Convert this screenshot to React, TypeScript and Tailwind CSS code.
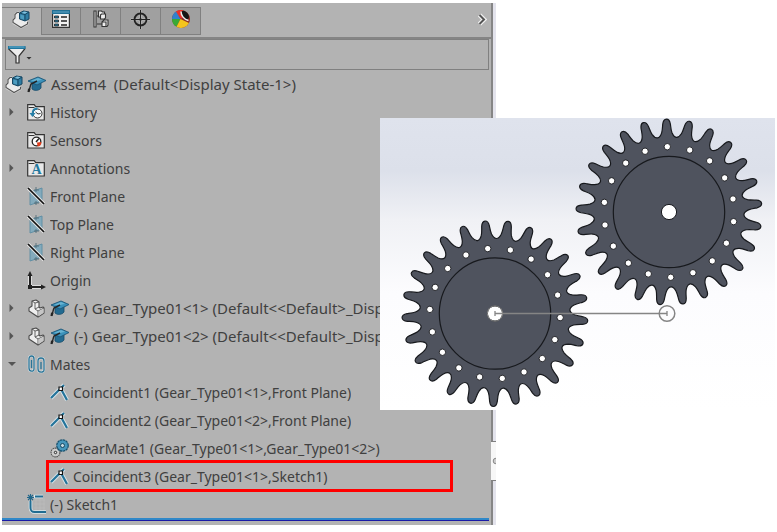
import type { ReactNode } from "react";
import clsx from "clsx";

const GEAR_TEETH = 25;
const GEAR_HOLES = 18;

const polar = (r: number, deg: number) => {
  const a = (deg * Math.PI) / 180;
  return `${(r * Math.cos(a)).toFixed(2)} ${(r * Math.sin(a)).toFixed(2)}`;
};

// outline of one gear, first tooth tip pointing at `start` degrees
const gearPath = (start: number) => {
  const step = 360 / GEAR_TEETH;
  let d = `M${polar(93, start)}`;
  for (let i = 0; i < GEAR_TEETH; i++) {
    const t = start + i * step;
    const n = t + step;
    d += `C${polar(93, t + 1.1)} ${polar(91.3, t + 2.1)} ${polar(88, t + 2.5)}`;
    d += `C${polar(85, t + 2.8)} ${polar(82, t + 3)} ${polar(79.5, t + 3.7)}`;
    d += `C${polar(77, t + 4.5)} ${polar(75, t + 5.7)} ${polar(75, t + step / 2)}`;
    d += `C${polar(75, n - 5.7)} ${polar(77, n - 4.5)} ${polar(79.5, n - 3.7)}`;
    d += `C${polar(82, n - 3)} ${polar(85, n - 2.8)} ${polar(88, n - 2.5)}`;
    d += `C${polar(91.3, n - 2.1)} ${polar(93, n - 1.1)} ${polar(93, n)}`;
  }
  return d + "Z";
};

const Gear = ({ x, y, tooth, hole }: { x: number; y: number; tooth: number; hole: number }) => (
  <g transform={`translate(${x} ${y})`} stroke="#17191d">
    <path d={gearPath(tooth)} fill="#4f535e" strokeWidth="1.2" />
    <circle r="55.7" fill="none" strokeWidth="1.2" />
    <circle r="7.6" fill="#fff" strokeWidth="1" />
    {Array.from({ length: GEAR_HOLES }, (_, i) => {
      const a = ((hole + i * 20) * Math.PI) / 180;
      return <circle key={i} cx={65.3 * Math.cos(a)} cy={65.3 * Math.sin(a)} r="3.2" fill="#fff" strokeWidth="0.9" />;
    })}
  </g>
);

const AssemblyIcon = () => (
  <svg width="18" height="19" viewBox="0 0 18 19" className="flex-none">
    <path d="M6 3 4 4v4L2 10v3l7 4 6-3Z" fill="#e4e4e4" stroke="#dcdcdc" strokeWidth="3" strokeLinejoin="round" />
    <path d="M7 2.500 5 2.500 3 4.500V8L1 10v2.500l8 5 6.500-3.500v-2" fill="#ececec" stroke="#555" strokeWidth="1.100" />
    <path d="m7.500 3 4-2 5.500 1v7l-4 2-5.500-2Z" fill="#2f7da3" stroke="#174763" />
    <path d="m7.500 3 5.500 1.500L17 2M13 4.500V11" fill="none" stroke="#174763" />
    <path d="m9.500 2.900 3-1.400 3 .7-2.500 1.500Z" fill="#7fc0dd" />
    <path d="M8.500 4.700 12 5.600v3.900l-3.500-1Z" fill="#4d9dc0" />
  </svg>
);

const PartIcon = () => (
  <svg width="18" height="19" viewBox="0 0 18 19" className="flex-none">
    <path d="m5 2 4-1 3 2v5l1 1 3-1 1 1v5l-6 4-9-6v-3l3-2Z" fill="#eee" stroke="#4b4b4b" strokeWidth="1.100" strokeLinejoin="round" />
    <path d="m5 2 3 2v6l3 2v6M8 4l4-1M8 10l4-2M11 12l6-3" fill="none" stroke="#555" strokeWidth="0.900" />
    <path d="m11.500 12.500 5-3V14l-5 3.300Z" fill="#c6c6c6" />
  </svg>
);

const CapIcon = () => (
  <svg width="20" height="18" viewBox="0 0 20 18" className="flex-none">
    <path d="M5 8v6c2 2 7 2 9-1V7Z" fill="#236b91" stroke="#174b6b" strokeWidth="0.800" />
    <path d="m1 6 10-4 8 3.500L10 10Z" fill="#3b91ba" stroke="#1c5677" strokeWidth="0.900" />
    <path d="m4 5.800 7-2.700 4 1.700-6 1.500Z" fill="#67b3d2" />
    <path d="m10 6-6 3c-1 2-1 5-2.500 8" fill="none" stroke="#252525" strokeWidth="1.400" />
    <path d="M1 13.500 3.500 14 2.500 17H.500Z" fill="#252525" />
  </svg>
);

const Folder = ({ children }: { children: ReactNode }) => (
  <svg width="18" height="18" viewBox="0 0 18 18" className="flex-none">
    <path d="M.7 17V1.700h6.500l1.500 2h8.600V17Z" fill="#e8e8e8" stroke="#333" strokeWidth="1.200" />
    <path d="M1.500 4.500h6" stroke="#333" />
    {children}
  </svg>
);

const HistoryIcon = () => (
  <Folder>
    <circle cx="10.500" cy="10.500" r="4.500" fill="#f7fbfd" stroke="#333" strokeWidth="1" />
    <path d="m8.500 9 2.500 2 2.500-.500" fill="none" stroke="#333" />
    <path d="M10.500 5.500C7 5.500 5.500 8 5.500 11" fill="none" stroke="#2580a9" strokeWidth="1.800" />
    <path d="M2.500 10h6l-3 4Z" fill="#2580a9" />
  </Folder>
);

const SensorsIcon = () => (
  <Folder>
    <circle cx="9.500" cy="10.500" r="4.300" fill="#fff" stroke="#222" strokeWidth="1.300" />
    <path d="m9 11 3-3.500" stroke="#222" strokeWidth="1.500" />
    <path d="M10 11.500 14.500 11c0 3-2 4.500-4 4.500Z" fill="#df3d1d" />
  </Folder>
);

const AnnotationsIcon = () => (
  <Folder>
    <text x="9.500" y="15" textAnchor="middle" fill="#24799f" className="font-['Liberation_Serif',serif] text-[14px] font-bold">
      A
    </text>
  </Folder>
);

const PlaneIcon = () => (
  <svg width="18" height="19" viewBox="0 0 18 19" className="flex-none">
    <path d="m3 5 12-4v13L3 18Z" fill="#83aabc" stroke="#5c8ca3" strokeWidth="0.900" />
    <path d="M9 0v5M7 3h5M9 14v4M7 16h5" stroke="#546d79" strokeWidth="0.900" />
    <path d="m1 1 16 16" stroke="#e7e7e7" strokeWidth="3.500" />
    <path d="m1 1 16 16" stroke="#111" strokeWidth="1.700" />
  </svg>
);

const OriginIcon = () => (
  <svg width="19" height="19" viewBox="0 0 19 19" className="flex-none">
    <path d="M3 3v13h12" fill="none" stroke="#ddd" strokeWidth="4" />
    <path d="M3 3v13h12" fill="none" stroke="#222" strokeWidth="2" />
    <path d="M3 0 .500 5h5ZM19 16l-5-2.500v5ZM1 14h4v4H1Z" fill="#222" />
  </svg>
);

const MatesIcon = () => (
  <svg width="19" height="19" viewBox="0 0 19 19" className="flex-none" fill="none">
    <g stroke="#d5e0e5" strokeWidth="2.400">
      <path d="M2 4v9c0 4 5 4 5 0V4c0-4-5-4-5 0" />
      <path d="M11 6v8c0 4 6 4 6 0V6c0-4-6-4-6 0" />
    </g>
    <g stroke="#2b7496" strokeWidth="1.300">
      <path d="M4.500 5v8M2 13V4c0-4 5-4 5 0v10c0 3-5 3-5-1" />
      <path d="M14 7v7M11 14V6c0-4 6-4 6 0v9c0 3-6 3-6-1" />
    </g>
  </svg>
);

const CoincidentIcon = () => (
  <svg width="19" height="19" viewBox="0 0 19 19" className="flex-none">
    <path d="M1 15 14 2M11 6l6 11" stroke="#dce5e9" strokeWidth="4" />
    <path d="M1 15 14 2M11 6l6 11" stroke="#24749b" strokeWidth="2.200" />
    <path d="M9 4h3.500v3.500H9Z" fill="#fff" stroke="#111" strokeWidth="1.200" />
  </svg>
);

const GearMateIcon = () => (
  <svg width="20" height="19" viewBox="0 0 20 19" className="flex-none">
    <circle cx="5.500" cy="13.500" r="4.300" fill="#ccc" stroke="#555" strokeWidth="1.400" strokeDasharray="1.500 .6" />
    <circle cx="5.500" cy="13.500" r="3.800" fill="#ccc" />
    <circle cx="5.500" cy="13.500" r="1.200" fill="#eee" stroke="#222" />
    <circle cx="12.500" cy="6.500" r="5.600" fill="#4b9dc4" stroke="#16516f" strokeWidth="1.500" strokeDasharray="2.400 .5" />
    <circle cx="12.500" cy="6.500" r="5" fill="#4796bb" />
    <circle cx="12.500" cy="6.500" r="2" fill="#c9dce4" stroke="#174861" />
  </svg>
);

const SketchIcon = () => (
  <svg width="20" height="20" viewBox="0 0 20 20" className="flex-none" fill="none">
    <path d="M7 6h11M7 10h11M7 14h11M9 4v13M13 4v13M17 4v13" stroke="#bfbfbf" strokeWidth="0.600" />
    <path d="M7 2.500h9M3.500 7v6c0 4 1 5 4 5H19" stroke="#dceaf0" strokeWidth="3.500" />
    <path d="M8 2.500h8M3.500 7v6c0 4 1 5 4 5H19" stroke="#216c91" strokeWidth="2" />
    <path d="M3.500 0v7M0 3.500h7M1 1l5 5M6 1 1 6" stroke="#20668a" strokeWidth="1.100" />
  </svg>
);

const PropertyIcon = () => (
  <svg width="18" height="18" viewBox="0 0 18 18">
    <path d="M.6.600h16.800v16.800H.600Z" fill="#f2f2f2" stroke="#333" strokeWidth="1.200" />
    <path d="M0 0h18v4H0Z" fill="#216f94" />
    <path d="M1 2h16" stroke="#67aaca" />
    <path d="M2.500 6h4v2h-4ZM2.500 10h4v2h-4ZM2.500 14h4v2h-4Z" fill="#287ca3" stroke="#222" strokeWidth="0.800" />
    <path d="M9 7h6M9 11h6M9 15h6" stroke="#222" strokeWidth="1.300" />
  </svg>
);

const ConfigIcon = () => (
  <svg width="16" height="18" viewBox="0 0 16 18" fill="#eee" stroke="#333" strokeWidth="1.100">
    <path d="M4 6h4M4 14h5" fill="none" />
    <path d="M1 1h2v16H1Z" />
    <path d="M5.500 3V1h3l1 1h2v5H5.500Z" />
    <path d="m7.500 5 1-1h4v4l-1 1h-4ZM9 12l2-2h4v5l-1 1.500H9Z" />
    <path d="M9 12h4v4" fill="none" />
  </svg>
);

const TargetIcon = () => (
  <svg width="19" height="19" viewBox="0 0 19 19" fill="none">
    <path d="M9.500 0v19M0 9.500h19" stroke="#dedede" strokeWidth="3" />
    <circle cx="9.500" cy="9.500" r="6" stroke="#222" strokeWidth="1.800" />
    <path d="M9.500 0v19M0 9.500h19" stroke="#222" strokeWidth="1.500" />
  </svg>
);

const AppearanceIcon = () => (
  <svg width="18" height="18" viewBox="0 0 18 18">
    <circle cx="9" cy="9" r="9" fill="#8c2b22" />
    <path d="M9 9 3 2.300A9 9 0 0 1 11 .200L12 6Z" fill="#ed3029" />
    <path d="M8.500 9 0 9A9 9 0 0 1 4 1.500Z" fill="#3182cc" />
    <path d="M8.500 9 0 9A9 9 0 0 0 4.500 16.800Z" fill="#39a936" />
    <path d="M8.500 9 4.500 16.800A9 9 0 0 0 17 13Z" fill="#f4c51e" />
    <ellipse cx="13" cy="5" rx="3" ry="5" transform="rotate(-40 13 5)" fill="#151515" />
    <path d="M9 1.500c0 4 3 8 7.500 9" stroke="#ececec" strokeWidth="1.500" fill="none" />
  </svg>
);

const FilterIcon = () => (
  <svg width="24" height="20" viewBox="0 0 24 20">
    <path d="M.700 2h16v2L11 11v7H8v-7L.700 4Z" fill="#ededed" stroke="#333" strokeWidth="1.200" />
    <path d="M0 1h17.500v3H0Z" fill="#20769e" />
    <path d="M1 2h15.500" stroke="#69b0cf" />
    <path d="M18.500 12h5L21 14.500Z" fill="#333" />
  </svg>
);

const tabs = [
  { label: "FeatureManager", icon: <AssemblyIcon /> },
  { label: "PropertyManager", icon: <PropertyIcon /> },
  { label: "ConfigurationManager", icon: <ConfigIcon /> },
  { label: "DimXpertManager", icon: <TargetIcon /> },
  { label: "DisplayManager", icon: <AppearanceIcon /> },
];

type Row = {
  label: string;
  icon: ReactNode;
  arrow?: "right" | "down";
  cap?: boolean;
};

const items: Row[] = [
  { label: "History", icon: <HistoryIcon />, arrow: "right" },
  { label: "Sensors", icon: <SensorsIcon /> },
  { label: "Annotations", icon: <AnnotationsIcon />, arrow: "right" },
  { label: "Front Plane", icon: <PlaneIcon /> },
  { label: "Top Plane", icon: <PlaneIcon /> },
  { label: "Right Plane", icon: <PlaneIcon /> },
  { label: "Origin", icon: <OriginIcon /> },
  { label: "(-) Gear_Type01<1> (Default<<Default>_Display State 1>)", icon: <PartIcon />, arrow: "right", cap: true },
  { label: "(-) Gear_Type01<2> (Default<<Default>_Display State 1>)", icon: <PartIcon />, arrow: "right", cap: true },
  { label: "Mates", icon: <MatesIcon />, arrow: "down" },
];

const mates = [
  { label: "Coincident1 (Gear_Type01<1>,Front Plane)", icon: <CoincidentIcon /> },
  { label: "Coincident2 (Gear_Type01<2>,Front Plane)", icon: <CoincidentIcon /> },
  { label: "GearMate1 (Gear_Type01<1>,Gear_Type01<2>)", icon: <GearMateIcon /> },
  { label: "Coincident3 (Gear_Type01<1>,Sketch1)", icon: <CoincidentIcon />, marked: true },
];

const TreeRow = ({ label, icon, arrow, cap }: Row) => (
  <li className="flex h-7 items-center">
    <span className="flex w-[25px] flex-none pl-1.5">
      {arrow && (
        <button aria-label={`Toggle ${label}`}>
          <svg width="8" height="8" viewBox="0 0 8 8" fill="#555">
            <path d={arrow === "right" ? "M1.500 0v8l4-4Z" : "M0 2h8L4 6Z"} />
          </svg>
        </button>
      )}
    </span>
    <span className="flex w-[23px] flex-none">{icon}</span>
    {cap && (
      <span className="flex w-6 flex-none">
        <CapIcon />
      </span>
    )}
    <span className={clsx("truncate", cap && "text-[15px]")}>{label}</span>
  </li>
);

const FeaturePanel = () => (
  <section className="mt-[3px] flex min-w-0 flex-1 flex-col border-r-2 border-[#858585] bg-[#b3b3b3] pb-1">
    <header className="flex h-9 items-start justify-between border-b-2 border-[#858585] pt-1">
      <div className="flex">
        {tabs.map((tab, i) => (
          <button
            key={tab.label}
            aria-label={tab.label}
            className={clsx(
              "flex h-7 items-center justify-center border-t border-[#808080] pb-1",
              i === 0 ? "w-[39px] pr-0.5" : "w-10 border-r border-b bg-[#a0a0a0]",
              i === 1 && "border-l"
            )}
          >
            {tab.icon}
          </button>
        ))}
      </div>
      <button aria-label="Expand panel" className="pt-1.5 pr-1">
        <svg width="10" height="13" viewBox="0 0 10 13" fill="none">
          <path d="m2.500 2 4.500 4.500L2.500 11" stroke="#f2f2f2" strokeWidth="4.500" />
          <path d="m2.500 2 4.500 4.500L2.500 11" stroke="#555" strokeWidth="2" />
        </svg>
      </button>
    </header>

    <div className="mr-0.5 ml-[3px] flex h-[31px] items-center border border-[#808080] pl-0.5">
      <button aria-label="Filter options">
        <FilterIcon />
      </button>
      <input aria-label="Filter tree" className="h-full min-w-0 flex-1 outline-none" />
    </div>

    <div className="flex h-7 items-center pl-[3px]">
      <AssemblyIcon />
      <span className="flex w-7 flex-none pl-1">
        <CapIcon />
      </span>
      <span className="truncate text-[15px] whitespace-pre">Assem4  (Default&lt;Display State-1&gt;)</span>
    </div>
    <ul>
      {items.map((item) => (
        <TreeRow key={item.label} {...item} />
      ))}
      <li>
        <ul className="pr-10 pl-[46px]">
          {mates.map((mate) => (
            <li
              key={mate.label}
              className={clsx("flex h-7 items-center", mate.marked && "outline-3 -outline-offset-1 outline-[#ff0000]")}
            >
              <span className="flex w-[25px] flex-none pl-0.5">{mate.icon}</span>
              <span className="truncate">{mate.label}</span>
            </li>
          ))}
        </ul>
      </li>
      <TreeRow label="(-) Sketch1" icon={<SketchIcon />} />
    </ul>
    <div className="mr-0.5 h-[3px] border-b border-[#1a1aa6] bg-[#3088c8]" />
  </section>
);

const GearView = () => (
  <figure className="absolute top-[118px] right-0.5 w-[395px] bg-[linear-gradient(to_bottom,#dfe3ed,#dce0ea_18%,#f0f1f5_35%,#fcfcfe_60%,#fff)]">
    <svg viewBox="380 118 395 292" className="block w-full" role="img" aria-label="Two meshing gears">
      <Gear x={495} y={313.5} tooth={-81.8} hole={-96.4} />
      <Gear x={669} y={212} tooth={-91.6} hole={-91.500} />
      <g fill="none" stroke="#858585" strokeWidth="1.300">
        <path d="M495 313.500h172M495 311v5M667 311v5" />
        <circle cx="495" cy="313.500" r="7.700" strokeWidth="1" />
        <circle cx="667" cy="313.500" r="7.800" strokeWidth="1.500" />
      </g>
    </svg>
  </figure>
);

export default function App() {
  return (
    <main className="relative flex bg-white pl-0.5 font-['Noto_Sans','Open_Sans',sans-serif] text-[14px] text-[#404040]">
      <FeaturePanel />
      {/* splitter between the tree and the graphics area */}
      <div className="mt-[3px] mr-[281px] flex w-[3px] flex-col justify-end bg-[#e3e3ec]">
        <div className="-ml-0.5 mb-11 flex h-10 items-center justify-end overflow-hidden border-y border-[#808080] bg-[#f7f7f7]">
          <svg width="4" height="8" viewBox="0 0 4 8">
            <circle cx="4" cy="4" r="2.800" fill="#ccc" stroke="#888" />
          </svg>
        </div>
      </div>
      <GearView />
    </main>
  );
}
